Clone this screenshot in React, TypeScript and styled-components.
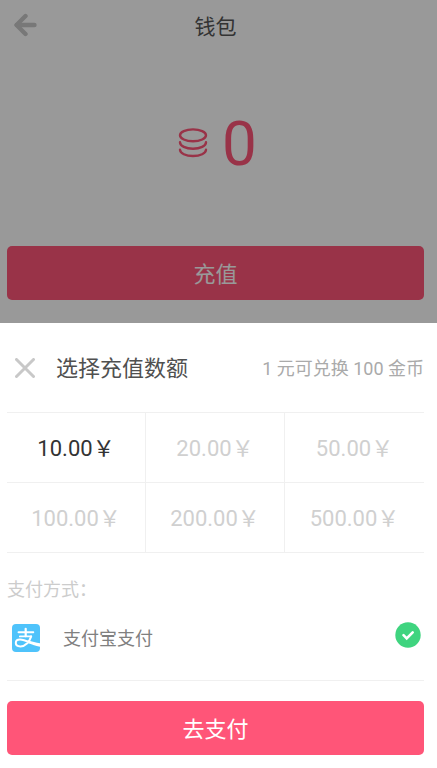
import React, { useState } from "react";
import styled, { createGlobalStyle } from "styled-components";

const GlobalStyle = createGlobalStyle`
  *, *::before, *::after { box-sizing: border-box; }
  body {
    margin: 0;
    background: #fff;
    font-family: Roboto, "Noto Sans CJK SC", sans-serif;
  }
  button, input { font: inherit; }
`;

const Screen = styled.div`
  display: flex;
  flex-direction: column;
  min-height: 100vh;
`;

const Wallet = styled.section`
  position: relative;
  flex: 1;
  display: flex;
  flex-direction: column;
  padding: 0 13px 23px 7px;

  &::after {
    content: "";
    position: absolute;
    inset: 0;
    background: rgba(0, 0, 0, 0.4);
  }
`;

const TopBar = styled.header`
  display: grid;
  grid-template-columns: 36px 1fr 36px;
  align-items: center;
  height: 50px;
`;

const Title = styled.h1`
  margin: 0;
  padding-top: 3px;
  text-align: center;
  font-size: 21px;
  line-height: 32px;
  font-weight: 400;
  color: #555;
`;

const IconButton = styled.button`
  display: flex;
  align-items: center;
  justify-content: center;
  width: 36px;
  height: 36px;
  padding: 0;
  border: 0;
  background: none;
  color: #c8c8c8;
`;

const Balance = styled.div`
  flex: 1;
  display: flex;
  align-items: center;
  justify-content: center;
  gap: 14px;
  padding: 0 0 8px 4px;
  color: #ff5578;
`;

const BalanceValue = styled.span`
  font-size: 62px;
  line-height: 72px;
`;

const PrimaryButton = styled.button`
  width: 100%;
  height: 54px;
  padding: 4px 0 0;
  border: 0;
  border-radius: 5px;
  background: #ff5578;
  color: #fff;
  font-size: 22px;
  line-height: 32px;
`;

const Sheet = styled.section`
  padding: 0 13px 13px 7px;
  background: #fff;
`;

const SheetHeader = styled.header`
  display: flex;
  align-items: center;
  height: 89px;
`;

const SheetTitle = styled.h2`
  flex: 1;
  margin: 0 0 0 13px;
  padding-top: 3px;
  font-size: 22px;
  line-height: 32px;
  font-weight: 400;
  color: #505050;
`;

const Rate = styled.span`
  padding-top: 3px;
  font-size: 18px;
  line-height: 26px;
  color: #aaa;
`;

const AmountGrid = styled.fieldset`
  display: grid;
  grid-template-columns: repeat(3, 1fr);
  min-width: 0;
  margin: 0;
  padding: 0;
  border: 0;
  border-top: 1px solid #f0f0f0;
`;

const HiddenRadio = styled.input`
  position: absolute;
  inset: 0;
  margin: 0;
  opacity: 0;
`;

const Amount = styled.label<{ $selected: boolean }>`
  position: relative;
  display: flex;
  align-items: center;
  justify-content: center;
  height: 70px;
  padding-top: 3px;
  border-bottom: 1px solid #f0f0f0;
  font-size: 22px;
  line-height: 32px;
  color: ${(p) => (p.$selected ? "#333" : "#d0d0d0")};

  &:not(:nth-of-type(3n)) {
    border-right: 1px solid #f0f0f0;
  }
`;

const MethodHeading = styled.h3`
  margin: 0;
  padding-top: 24px;
  font-size: 18px;
  line-height: 26px;
  font-weight: 400;
  color: #ccc;
`;

const Method = styled.label`
  display: flex;
  align-items: center;
  height: 78px;
  margin-bottom: 20px;
  padding: 0 3px 8px 5px;
  border-bottom: 1px solid #f0f0f0;
`;

const MethodName = styled.span`
  flex: 1;
  margin-left: 23px;
  padding-top: 3px;
  font-size: 18px;
  line-height: 26px;
  color: #808080;
`;

const Check = styled.span`
  position: relative;
  display: flex;
  margin-bottom: 6px;
`;

const amounts = ["10.00", "20.00", "50.00", "100.00", "200.00", "500.00"];

const BackIcon = () => (
  <svg width="24" height="24" viewBox="0 0 24 24" fill="none" stroke="currentColor" strokeWidth="4.4" strokeLinecap="round" strokeLinejoin="round">
    <path d="M12.5 3 3.5 12l9 9" />
    <path d="M4 12h17.500" />
  </svg>
);

const CloseIcon = () => (
  <svg width="20" height="20" viewBox="0 0 20 20" stroke="currentColor" strokeWidth="3" strokeLinecap="round">
    <path d="M1.500 1.500l17 17M18.500 1.500l-17 17" />
  </svg>
);

const CoinsIcon = () => (
  <svg width="30" height="32" viewBox="0 0 30 32" fill="none" stroke="currentColor" strokeWidth="2.4" strokeLinecap="round">
    <ellipse cx="15" cy="7.300" rx="13" ry="5.900" />
    <path d="M2 14.200c0 3.700 5.800 6.600 13 6.600s13-2.900 13-6.600" />
    <path d="M2 21.800c0 3.500 5.800 6.200 13 6.200s13-2.700 13-6.200" />
  </svg>
);

const AlipayIcon = () => (
  <svg width="28" height="28" viewBox="0 0 28 28" fill="none">
    <rect width="28" height="28" rx="4" fill="#4fc3fb" />
    <g stroke="#fff" strokeLinecap="round" strokeLinejoin="round">
      <path d="M6.500 8.200h14.800" strokeWidth="1.900" />
      <path d="M13.700 4.800v7.400" strokeWidth="2.200" />
      <path d="M7.800 12.400h11.400" strokeWidth="1.700" />
      <path d="M19.200 12.400C17.500 17.800 13.200 22.400 8.400 22.400c-3.100 0-4.600-1.500-4.600-3.400 0-2 1.700-3.400 4.200-3.400 3.600 0 7.400 1.900 11.200 3.600" strokeWidth="2" />
    </g>
    <path d="M16 16.300c4 1.500 8 2.400 12 2.900v3.600c-4.500-.7-9-2.500-13.500-4.700z" fill="#fff" />
  </svg>
);

const CheckIcon = () => (
  <svg width="26" height="26" viewBox="0 0 26 26" fill="none">
    <circle cx="13" cy="13" r="12.700" fill="#3fd47f" />
    <path d="M8.500 13.200l3.200 3.200 6-6" stroke="#fff" strokeWidth="2.600" strokeLinecap="round" />
  </svg>
);

export default function App() {
  const [selected, setSelected] = useState("10.00");

  return (
    <>
      <GlobalStyle />
      <Screen>
        <Wallet>
          <TopBar>
            <IconButton type="button" aria-label="返回"><BackIcon /></IconButton>
            <Title>钱包</Title>
          </TopBar>
          <Balance>
            <CoinsIcon />
            <BalanceValue>0</BalanceValue>
          </Balance>
          <PrimaryButton type="button">充值</PrimaryButton>
        </Wallet>
        <Sheet>
          <SheetHeader>
            <IconButton type="button" aria-label="关闭"><CloseIcon /></IconButton>
            <SheetTitle>选择充值数额</SheetTitle>
            <Rate>1 元可兑换 100 金币</Rate>
          </SheetHeader>
          <AmountGrid aria-label="选择充值数额">
            {amounts.map((value) => (
              <Amount key={value} $selected={value === selected}>
                <HiddenRadio
                  type="radio"
                  name="amount"
                  value={value}
                  checked={value === selected}
                  onChange={() => setSelected(value)}
                />
                {value}￥
              </Amount>
            ))}
          </AmountGrid>
          <MethodHeading>支付方式：</MethodHeading>
          <Method>
            <AlipayIcon />
            <MethodName>支付宝支付</MethodName>
            <Check>
              <HiddenRadio type="radio" name="method" value="alipay" defaultChecked />
              <CheckIcon />
            </Check>
          </Method>
          <PrimaryButton type="button">去支付</PrimaryButton>
        </Sheet>
      </Screen>
    </>
  );
}
